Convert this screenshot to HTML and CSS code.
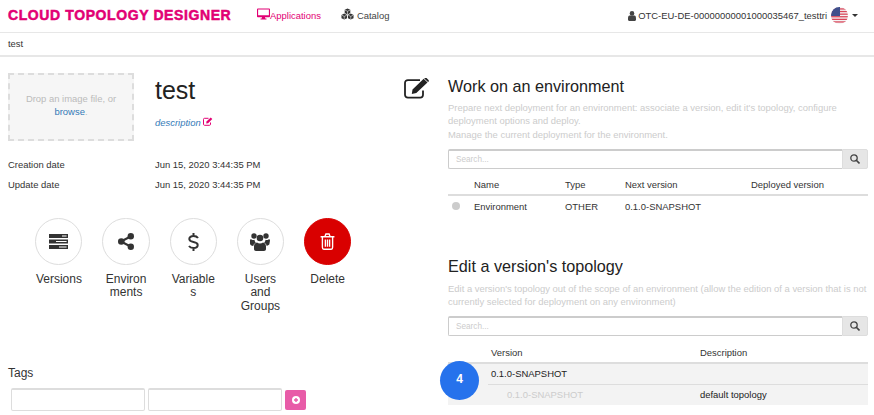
FILE: index.html
```html
<!DOCTYPE html>
<html lang="en">
<head>
    <meta charset="UTF-8">
    <title>Cloud Topology Designer</title>
    <link rel="stylesheet" href="styles.css">
</head>
<body>
    <header class="topbar">
        <div class="logo">CLOUD TOPOLOGY DESIGNER</div>
        <nav class="nav">
            <a class="nav-item active">
                <svg class="nav-icon" viewBox="0 0 14 12"><path fill="currentColor" d="M1.2 0h11.6C13.5 0 14 .5 14 1.2v7.1c0 .7-.5 1.2-1.2 1.2H8.600l.3 1.300h1.300v1.200H3.800v-1.200h1.300l.3-1.300H1.200C.5 9.500 0 9 0 8.300V1.200C0 .5.5 0 1.200 0zm0 1.200v6.200h11.600V1.200z"/></svg>
                Applications
            </a>
            <a class="nav-item">
                <svg class="nav-icon cubes" viewBox="0 0 14 12">
                    <path fill="#333" d="M7 0l3 1.500v3.500L7 6.500 4 5V1.500zM3.500 5.500l3 1.500v3.500L3.500 12l-3-1.500V7zM10.500 5.500l3 1.500v3.500l-3 1.500-3-1.500V7z"/>
                    <path fill="none" stroke="#fff" stroke-width=".6" d="M4.300 1.800L7 3.100l2.700-1.300M7 3.100v3M.8 7.300l2.700 1.300 2.700-1.300M3.500 8.600v3M7.800 7.300l2.700 1.300 2.700-1.300M10.500 8.600v3"/>
                </svg>
                Catalog
            </a>
        </nav>
        <div class="user">
            <svg class="user-icon" viewBox="0 0 8 10"><circle cx="4" cy="2.400" r="2.300" fill="#444"/><path fill="#444" d="M1.600 4.400h4.800C7.500 4.400 8 5.600 8 7.400v1.200c0 .8-.5 1.400-1.200 1.400H1.200C.5 10 0 9.400 0 8.600V7.400c0-1.800.5-3 1.600-3z"/></svg>
            <span>OTC-EU-DE-00000000001000035467_testtri</span>
            <svg class="flag" viewBox="0 0 17 17">
                <defs><clipPath id="flagclip"><circle cx="8.500" cy="8.500" r="8.500"/></clipPath></defs>
                <g clip-path="url(#flagclip)">
                    <rect width="17" height="17" fill="#f4f4f4"/>
                    <rect y="1.300" width="17" height="1.300" fill="#d9475a"/>
                    <rect y="3.900" width="17" height="1.300" fill="#d9475a"/>
                    <rect y="6.500" width="17" height="1.300" fill="#d9475a"/>
                    <rect y="9.100" width="17" height="1.300" fill="#d9475a"/>
                    <rect y="11.700" width="17" height="1.300" fill="#d9475a"/>
                    <rect y="14.300" width="17" height="1.300" fill="#d9475a"/>
                    <rect width="9" height="9" fill="#3f4f8c"/>
                </g>
            </svg>
            <span class="caret"></span>
        </div>
    </header>

    <div class="crumbs">test</div>

    <main class="content">
        <section class="left">
            <div class="summary">
                <div class="dropzone">
                    <span>Drop an image file, or</span>
                    <a class="link">browse</a>.
                </div>
                <div class="app-title">
                    <h1>test</h1>
                    <a class="description">description
                        <svg class="desc-icon" viewBox="0 0 10 9"><path fill="none" stroke="#e20074" d="M7.500 5.500v1.800c0 .6-.4 1-1 1H1.500c-.6 0-1-.4-1-1V2.300c0-.6.4-1 1-1h4"/><path fill="#e20074" d="M3.500 4.600L7.700.6l1.600 1.500-4.200 4.100-1.900.3z"/></svg>
                    </a>
                </div>
            </div>

            <dl class="dates">
                <dt>Creation date</dt><dd>Jun 15, 2020 3:44:35 PM</dd>
                <dt>Update date</dt><dd>Jun 15, 2020 3:44:35 PM</dd>
            </dl>

            <div class="actions">
                <div class="action">
                    <div class="circle">
                        <svg viewBox="0 0 19 15" class="ic-versions"><path fill="#333" d="M0 0h19v4H0zM0 5.500h19v4H0zM0 11h19v4H0z"/><path fill="#fff" d="M13 1.400h4.600v1.200H13zM7 6.900h10.600v1.200H7zM10 12.400h7.600v1.200H10z"/></svg>
                    </div>
                    <div class="action-label">Versions</div>
                </div>
                <div class="action">
                    <div class="circle">
                        <svg viewBox="0 0 16 17" class="ic-share"><path stroke="#333" stroke-width="2" d="M3 8.500l9.500-5M3 8.500l9.500 5"/><circle cx="3.300" cy="8.500" r="3.300" fill="#333"/><circle cx="12.800" cy="3.200" r="3.200" fill="#333"/><circle cx="12.800" cy="13.800" r="3.200" fill="#333"/></svg>
                    </div>
                    <div class="action-label">Environments</div>
                </div>
                <div class="action">
                    <div class="circle">
                        <svg viewBox="0 0 11 18" class="ic-dollar"><path fill="none" stroke="#333" stroke-width="2" d="M10 5C9 3.500 7.500 3 5.500 3 3 3 1.300 4.200 1.300 6c0 2 1.700 2.500 4.200 3 2.500.5 4.200 1.200 4.200 3 0 1.900-1.700 3-4.200 3-2 0-3.500-.5-4.500-2M5.500 0v3M5.500 15v3"/></svg>
                    </div>
                    <div class="action-label">Variables</div>
                </div>
                <div class="action">
                    <div class="circle">
                        <svg viewBox="0 0 20 18" class="ic-users"><circle cx="4" cy="3" r="2.700" fill="#333"/><circle cx="16" cy="3" r="2.700" fill="#333"/><circle cx="10" cy="5" r="3.300" fill="#333"/><path fill="#333" d="M0 7.500C0 6.500.7 6 1.500 6.400c.8.600 2 .7 3 .3.1 1.300.7 2.300 1.400 3-1.500.5-2.300 1.500-2.600 3.300C1.500 13 0 12 0 10.500zM20 7.500c0-1-.7-1.500-1.500-1.100-.8.600-2 .7-3 .3-.1 1.300-.7 2.300-1.400 3 1.500.5 2.300 1.500 2.600 3.300 1.300-1 2.800-1 2.800-2.500zM7 9.500c1.700 1.300 4.300 1.300 6 0 1.800.3 3 1.700 3 4V16c0 1.200-.8 2-2 2H6c-1.200 0-2-.8-2-2v-2.500c0-2.300 1.200-3.700 3-4z"/></svg>
                    </div>
                    <div class="action-label">Users and Groups</div>
                </div>
                <div class="action">
                    <div class="circle danger">
                        <svg viewBox="0 0 14 16" class="ic-trash"><path fill="none" stroke="#fff" stroke-width="1.300" d="M2.200 4v9.500c0 1 .6 1.800 1.300 1.800h7c.7 0 1.300-.8 1.300-1.800V4M.5 3.500h13M4.500 3.500L5.500 1h3l1 2.500"/><path stroke="#fff" stroke-width="1.300" d="M5 6v7M7 6v7M9 6v7"/></svg>
                    </div>
                    <div class="action-label">Delete</div>
                </div>
            </div>

            <div class="tags">
                <div class="tags-title">Tags</div>
                <div class="tags-row">
                    <input class="tag-input" type="text">
                    <input class="tag-input" type="text">
                    <button class="tag-add">
                        <svg viewBox="0 0 8 8"><circle cx="4" cy="4" r="4" fill="#fff"/><path stroke="#e85ca8" stroke-width="1.400" d="M4 2v4M2 4h4"/></svg>
                    </button>
                </div>
            </div>
        </section>

        <div class="edit-col">
            <svg class="edit-icon" viewBox="0 0 25 21"><path fill="none" stroke="#222" stroke-width="1.800" d="M19 12.500v4.300c0 1.900-1 2.800-2.800 2.800H4c-1.900 0-3-1-3-2.800V5c0-1.800 1.100-2.800 3-2.800h12"/><path fill="#222" d="M8.500 11.500L19.700.8l3.800 3.600L12.300 15l-4.500 1zM20.800 0c.6-.3 1.200-.3 1.700.1l2 1.900c.5.500.5 1.200 0 1.700l-.5.400-3.700-3.600z"/></svg>
        </div>

        <section class="right">
            <h3>Work on an environment</h3>
            <p class="hint">Prepare next deployment for an environment: associate a version, edit it's topology, configure deployment options and deploy.<br>Manage the current deployment for the environment.</p>
            <div class="search">
                <input class="search-input" type="text" placeholder="Search...">
                <span class="search-btn">
                    <svg viewBox="0 0 10 10"><circle cx="4" cy="4" r="3.200" fill="none" stroke="#444" stroke-width="1.300"/><path stroke="#444" stroke-width="1.600" d="M6.300 6.300L9.500 9.500"/></svg>
                </span>
            </div>
            <div class="env-table">
                <div class="env-row env-head">
                    <span></span><span>Name</span><span>Type</span><span>Next version</span><span>Deployed version</span>
                </div>
                <div class="env-row">
                    <span><i class="dot"></i></span><span>Environment</span><span>OTHER</span><span>0.1.0-SNAPSHOT</span><span></span>
                </div>
            </div>

            <h3 class="second">Edit a version's topology</h3>
            <p class="hint short">Edit a version's topology out of the scope of an environment (allow the edition of a version that is not currently selected for deployment on any environment)</p>
            <div class="search">
                <input class="search-input" type="text" placeholder="Search...">
                <span class="search-btn">
                    <svg viewBox="0 0 10 10"><circle cx="4" cy="4" r="3.200" fill="none" stroke="#444" stroke-width="1.300"/><path stroke="#444" stroke-width="1.600" d="M6.300 6.300L9.500 9.500"/></svg>
                </span>
            </div>
            <div class="ver-table">
                <div class="ver-head"><span>Version</span><span>Description</span></div>
                <div class="ver-group">
                    <div class="ver-row"><span>0.1.0-SNAPSHOT</span><span></span></div>
                    <div class="ver-row sub"><span>0.1.0-SNAPSHOT</span><span>default topology</span></div>
                </div>
                <div class="badge">4</div>
            </div>
        </section>
    </main>
</body>
</html>
```

FILE: styles.css
```css
html, body {
    margin: 0;
    height: 415px;
    overflow: hidden;
}
body {
    font-family: "Liberation Sans", Arial, sans-serif;
    font-size: 9.45px;
    line-height: 13.3px;
    color: #333;
    background: #fff;
}

/* top bar */
.topbar {
    display: flex;
    align-items: center;
    height: 31px;
    padding: 0 16px 1px 8px;
    border-bottom: 1px solid #e7e7e7;
}
.logo {
    width: 249px;
    font-size: 14px;
    font-weight: bold;
    letter-spacing: 0.6px;
    color: #e20074;
    -webkit-text-stroke: 0.5px #e20074;
    white-space: nowrap;
}
.nav {
    display: flex;
    gap: 20px;
}
.nav-item {
    display: flex;
    align-items: center;
    color: #444;
}
.nav-item.active {
    color: #e20074;
}
.nav-icon {
    width: 13px;
    height: 12px;
    margin-top: -2px;
}
.nav-icon.cubes {
    margin-right: 3px;
}
.user {
    display: flex;
    align-items: center;
    margin-left: auto;
    color: #333;
}
.user-icon {
    width: 8px;
    height: 10px;
    margin-right: 2px;
}
.flag {
    width: 17px;
    height: 17px;
    margin-left: 4px;
}
.caret {
    width: 0;
    height: 0;
    margin-left: 4px;
    border-top: 3px solid #333;
    border-left: 3px solid transparent;
    border-right: 3px solid transparent;
}

.crumbs {
    height: 22px;
    line-height: 22px;
    padding-left: 8px;
    border-bottom: 2px solid #e7e7e7;
    color: #333;
}

.content {
    display: grid;
    grid-template-columns: 404px 44px 420px;
    position: relative;
}

/* left side */
.left {
    padding: 16px 0 0 8px;
}
.summary {
    display: flex;
}
.dropzone {
    width: 126px;
    height: 68px;
    box-sizing: border-box;
    padding-top: 17px;
    border: 2px dashed #ddd;
    background: #f6f6f6;
    text-align: center;
    color: #bbb;
}
.dropzone span {
    display: block;
}
.link {
    color: #337ab7;
}
.app-title {
    margin-left: 21px;
}
h1 {
    margin: 0;
    font-size: 25px;
    line-height: 34px;
    font-weight: normal;
    color: #222;
}
.description {
    display: block;
    margin-top: 9.4px;
    font-style: italic;
    color: #337ab7;
}
.desc-icon {
    width: 10px;
    height: 9px;
}
.dates {
    display: grid;
    grid-template-columns: 147px auto;
    row-gap: 6.7px;
    margin: 17px 0 0;
    color: #333;
}
.dates dd {
    margin: 0;
}
.actions {
    display: flex;
    gap: 20px;
    margin: 26.7px 0 0 27.3px;
}
.action {
    width: 47.2px;
    text-align: center;
}
.circle {
    display: flex;
    align-items: center;
    justify-content: center;
    width: 47.2px;
    height: 47.2px;
    box-sizing: border-box;
    border: 1px solid #ddd;
    border-radius: 50%;
    color: #333;
}
.circle.danger {
    background: #d90000;
    border-color: #d90000;
}
.action-label {
    margin-top: 8px;
    font-size: 12px;
    overflow-wrap: anywhere;
}
.ic-versions { width: 19px; height: 15px; }
.ic-share { width: 16px; height: 17px; }
.ic-dollar { width: 11px; height: 18px; }
.ic-users { width: 20px; height: 18px; }
.ic-trash { width: 15px; height: 17px; }

.tags {
    position: absolute;
    left: 8px;
    top: 310px;
}
.tags-title {
    font-size: 12px;
}
.tags-row {
    display: flex;
    align-items: center;
    gap: 3px;
    margin: 8px 0 0 3px;
}
.tag-input {
    width: 134px;
    height: 23px;
    box-sizing: border-box;
    padding: 0;
    border: 1px solid #ddd;
    border-top-width: 2px;
    border-radius: 2px;
}
.tag-add {
    display: flex;
    align-items: center;
    justify-content: center;
    width: 21px;
    height: 20px;
    padding: 0;
    border: none;
    border-radius: 2px;
    background: #e85ca8;
}
.tag-add svg {
    width: 8px;
    height: 8px;
}

.edit-icon {
    width: 25px;
    height: 21px;
    margin-top: 21px;
}

/* right side */
.right {
    padding-top: 17.5px;
}
h3 {
    margin: 0;
    font-size: 16.2px;
    line-height: 22px;
    font-weight: normal;
    color: #222;
}
.second {
    margin-top: 39.5px;
}
.hint {
    margin: 4.5px 0 8px;
    color: #ccc;
}
.hint.short {
    margin-bottom: 7.4px;
}
.search {
    display: flex;
    height: 20px;
}
.search-input {
    flex: 1;
    min-width: 0;
    box-sizing: border-box;
    padding: 0 7px;
    border: 1px solid #ccc;
    border-top-width: 2px;
    border-right: none;
    border-radius: 2px 0 0 2px;
    font-family: inherit;
    font-size: 8.2px;
}
.search-input::placeholder {
    color: #ccc;
}
.search-btn {
    display: flex;
    align-items: center;
    justify-content: center;
    width: 26px;
    background: #e6e6e6;
    border: 1px solid #ddd;
    box-sizing: border-box;
    border-radius: 0 2px 2px 0;
}
.search-btn svg {
    width: 10px;
    height: 10px;
}
.env-table {
    margin-top: 7px;
}
.env-row {
    display: grid;
    grid-template-columns: 26px 91px 60px 126px 1fr;
    height: 20px;
    line-height: 21px;
    color: #333;
}
.env-head {
    border-bottom: 2px solid #ddd;
    height: 18px;
    line-height: 18px;
}
.dot {
    display: inline-block;
    width: 8px;
    height: 8px;
    margin-left: 4px;
    border-radius: 50%;
    background: #ccc;
}
.ver-table {
    position: relative;
    margin-top: 7px;
}
.ver-head {
    display: grid;
    grid-template-columns: 209px 1fr;
    height: 19px;
    line-height: 19px;
    padding-left: 43px;
    border-bottom: 2px solid #ddd;
}
.ver-group {
    background: #f3f3f3;
}
.ver-row {
    display: grid;
    grid-template-columns: 209px 1fr;
    margin-left: 40px;
    padding-left: 3px;
    height: 20px;
    line-height: 20px;
    color: #222;
}
.ver-row.sub {
    box-sizing: border-box;
    height: 21px;
    padding-left: 19px;
    grid-template-columns: 193px 1fr;
    border-top: 1px solid #ddd;
}
.ver-row.sub span:first-child {
    color: #ccc;
}
.badge {
    position: absolute;
    left: -8px;
    top: 18px;
    width: 39px;
    height: 39px;
    line-height: 37px;
    text-align: center;
    border-radius: 50%;
    background: #2672ec;
    color: #fff;
    font-size: 12px;
    font-weight: bold;
}
```
